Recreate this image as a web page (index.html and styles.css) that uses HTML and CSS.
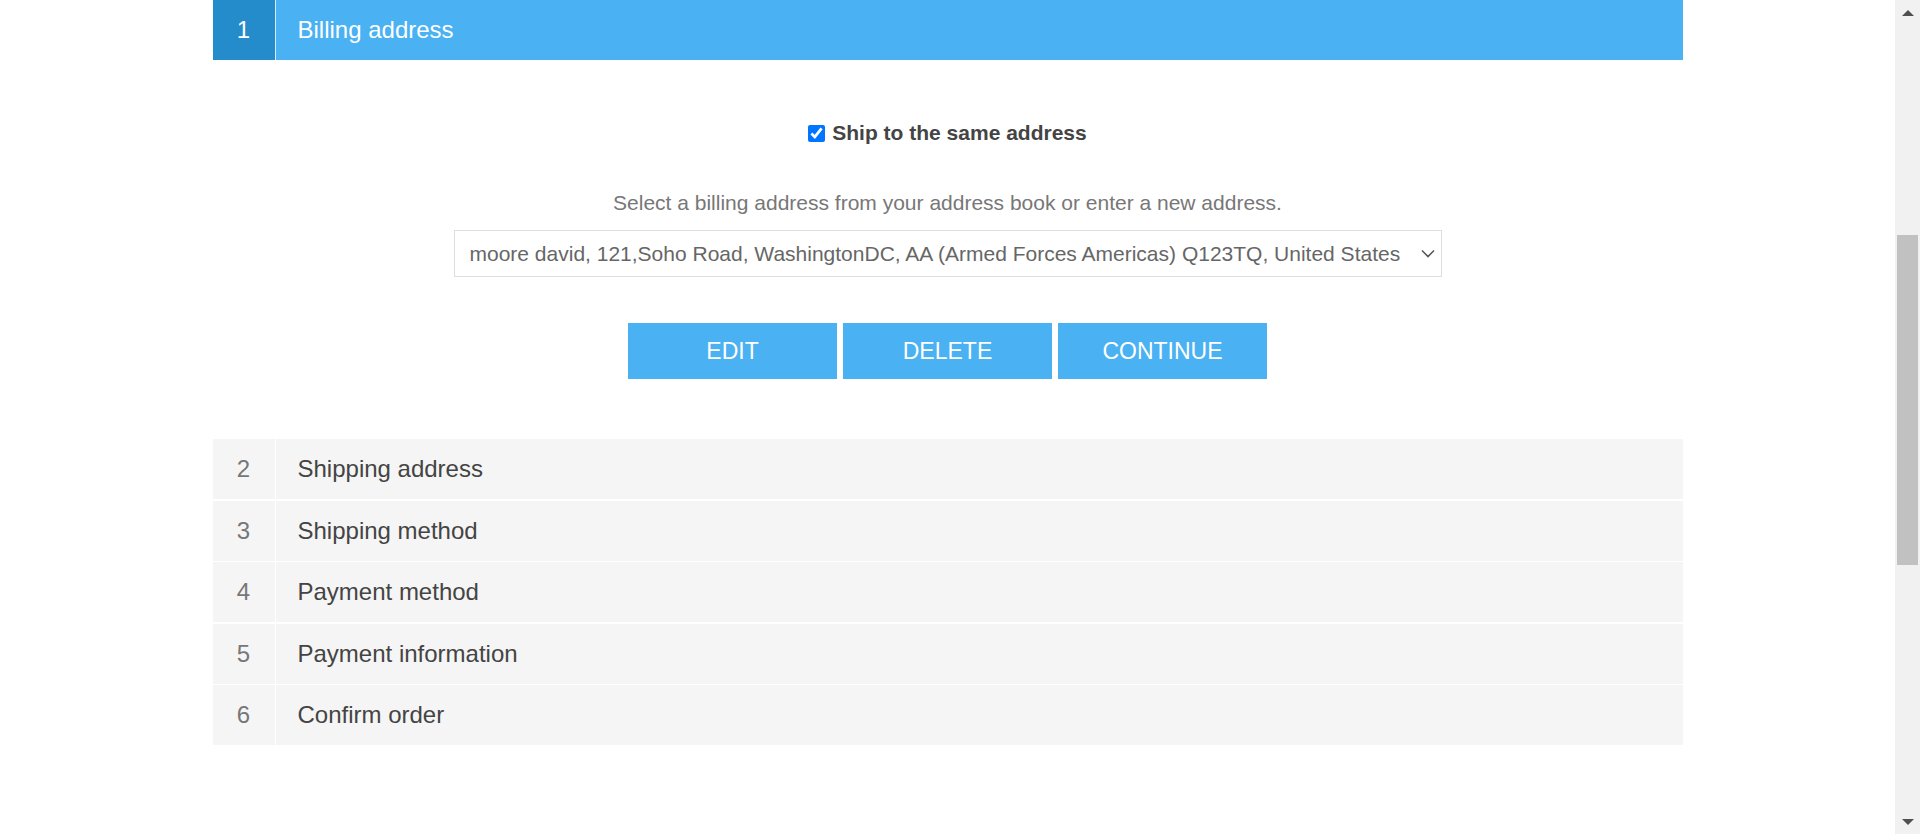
FILE: index.html
```html
<!DOCTYPE html>
<html lang="en">
<head>
<meta charset="utf-8">
<title>Checkout</title>
<link rel="stylesheet" href="styles.css">
</head>
<body>
<div class="page">
  <main class="checkout">
    <section class="step step-active">
      <div class="step-head">
        <span class="step-num">1</span>
        <h2 class="step-title">Billing address</h2>
      </div>
      <div class="step-body">
        <label class="ship-same">
          <input type="checkbox" class="ship-check" checked>
          <span>Ship to the same address</span>
        </label>
        <p class="select-hint">Select a billing address from your address book or enter a new address.</p>
        <div class="select-wrap">
          <select class="address-select">
            <option>moore david, 121,Soho Road, WashingtonDC, AA (Armed Forces Americas) Q123TQ, United States</option>
          </select>
          <svg class="select-arrow" width="14" height="9" viewBox="0 0 14 9" aria-hidden="true">
            <path d="M1 1.5 L7 7.5 L13 1.5" fill="none" stroke="#595959" stroke-width="1.6"/>
          </svg>
        </div>
        <div class="actions">
          <button class="btn">EDIT</button>
          <button class="btn">DELETE</button>
          <button class="btn">CONTINUE</button>
        </div>
      </div>
    </section>
    <ol class="steps">
      <li class="step-row"><span class="step-num">2</span><span class="step-title">Shipping address</span></li>
      <li class="step-row"><span class="step-num">3</span><span class="step-title">Shipping method</span></li>
      <li class="step-row"><span class="step-num">4</span><span class="step-title">Payment method</span></li>
      <li class="step-row"><span class="step-num">5</span><span class="step-title">Payment information</span></li>
      <li class="step-row"><span class="step-num">6</span><span class="step-title">Confirm order</span></li>
    </ol>
  </main>
</div>
<div class="fake-scrollbar" aria-hidden="true">
  <div class="sb-btn"><svg width="12" height="6" viewBox="0 0 12 6"><path d="M0 6 L6 0 L12 6 Z" fill="#505050"/></svg></div>
  <div class="sb-track"><div class="sb-thumb"></div></div>
  <div class="sb-btn"><svg width="12" height="6" viewBox="0 0 12 6"><path d="M0 0 L6 6 L12 0 Z" fill="#505050"/></svg></div>
</div>
</body>
</html>
```

FILE: styles.css
```css
body {
  margin: 0;
  font-family: "Liberation Sans", Arial, sans-serif;
  background: #fff;
  color: #444;
}
.page {
  margin-right: 25px;
}
.checkout {
  width: 1470px;
  margin: 0 auto;
}
.step-head {
  display: flex;
  height: 60px;
  background: #4ab1f2;
  color: #fff;
}
.step-head .step-num {
  width: 62px;
  background: #248cca;
  border-right: 1px solid #d6ecfb;
  display: flex;
  align-items: center;
  justify-content: center;
  font-size: 24px;
}
.step-title {
  margin: 0;
  padding-left: 22px;
  display: flex;
  align-items: center;
  font-size: 24px;
  font-weight: normal;
}
.step-body {
  display: flex;
  flex-direction: column;
  align-items: center;
}
.ship-same {
  margin-top: 60px;
  display: flex;
  align-items: center;
  gap: 7px;
  height: 26px;
  font-size: 21px;
  font-weight: bold;
  color: #444;
}
.ship-check {
  width: 17px;
  height: 17px;
  margin: 0;
  accent-color: #0075ff;
}
.select-hint {
  margin: 45px 0 0;
  line-height: 24px;
  font-size: 21px;
  color: #777;
}
.select-wrap {
  position: relative;
  margin-top: 15px;
  width: 988px;
  height: 47px;
}
.address-select {
  display: block;
  width: 100%;
  height: 47px;
  box-sizing: border-box;
  border: 1px solid #dedede;
  border-radius: 0;
  background: #fff;
  padding: 0 40px 0 15px;
  font-family: "Liberation Sans", Arial, sans-serif;
  font-size: 21px;
  color: #666;
  outline: none;
  appearance: none;
  -webkit-appearance: none;
}
.select-arrow {
  position: absolute;
  right: 7px;
  top: 19px;
  pointer-events: none;
}
.actions {
  margin-top: 46px;
  display: flex;
  gap: 6px;
}
.btn {
  width: 209px;
  height: 56px;
  border: 0;
  padding: 0;
  background: #4ab1f2;
  color: #fff;
  font-family: "Liberation Sans", Arial, sans-serif;
  font-size: 23px;
  cursor: pointer;
}
.steps {
  list-style: none;
  margin: 60px 0 0;
  padding: 0;
  display: flex;
  flex-direction: column;
  gap: 1.5px;
}
.step-row {
  display: flex;
  height: 60px;
  background: #f5f5f5;
}
.step-row .step-num {
  width: 62px;
  border-right: 1px solid #fff;
  display: flex;
  align-items: center;
  justify-content: center;
  font-size: 24px;
  color: #777;
}
.step-row .step-title {
  color: #444;
}
.fake-scrollbar {
  position: fixed;
  top: 0;
  right: 0;
  width: 25px;
  height: 100vh;
  background: #f1f1f1;
  display: flex;
  flex-direction: column;
}
.sb-btn {
  height: 25px;
  display: flex;
  align-items: center;
  justify-content: center;
}
.sb-track {
  flex: 1;
  padding-top: 210px;
}
.sb-thumb {
  margin: 0 2px;
  height: 330px;
  background: #c1c1c1;
}
```
